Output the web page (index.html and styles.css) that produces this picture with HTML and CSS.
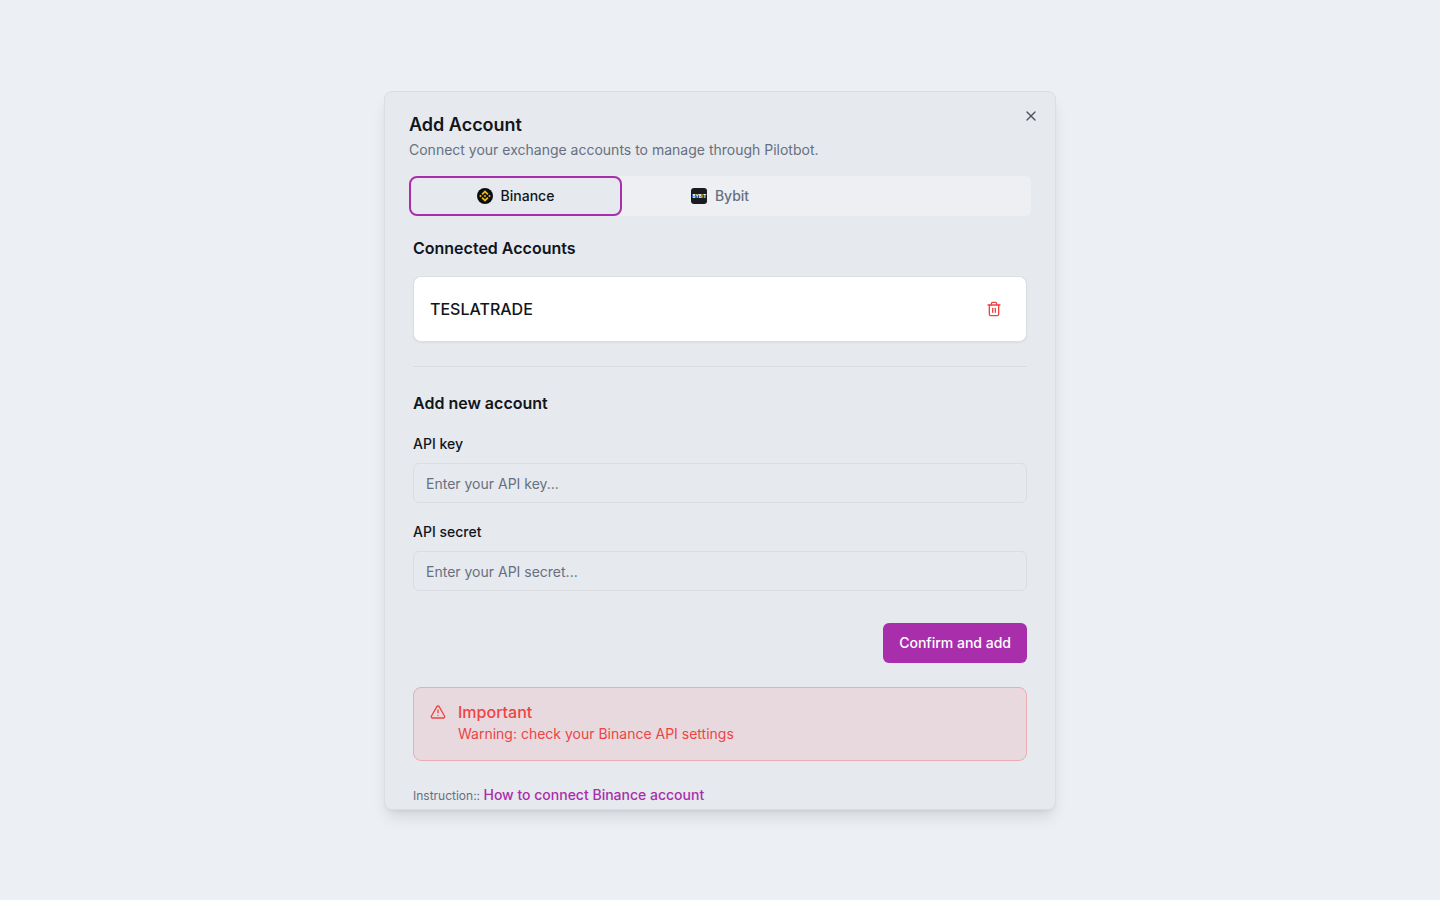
FILE: index.html
```html
<!DOCTYPE html>
<html lang="en">
<head>
    <meta charset="UTF-8">
    <meta name="viewport" content="width=device-width, initial-scale=1.0">
    <title>Add Account</title>
    <link rel="stylesheet" href="styles.css">
</head>
<body>
    <div class="dialog" role="dialog" aria-labelledby="dialogTitle">
        <button type="button" class="close-button" aria-label="Close">
            <svg class="icon" viewBox="0 0 24 24"><path d="M18 6 6 18"/><path d="m6 6 12 12"/></svg>
        </button>

        <div class="dialog-header">
            <h1 id="dialogTitle">Add Account</h1>
            <p>Connect your exchange accounts to manage through Pilotbot.</p>
        </div>

        <div class="tabs" role="tablist">
            <button type="button" class="tab active" role="tab" aria-selected="true">
                <svg class="logo" viewBox="0 0 32 32">
                    <circle cx="16" cy="16" r="16" fill="#0b0e11"/>
                    <g fill="#f0b90b" transform="translate(16 16) scale(1.15) translate(-16 -16)">
                        <path d="M12.1 14.4 16 10.5l3.9 3.9 2.3-2.3L16 5.9l-6.2 6.2z"/>
                        <path d="m5.9 16 2.3-2.3 2.3 2.3-2.3 2.3z"/>
                        <path d="m12.1 17.6 3.9 3.9 3.9-3.9 2.3 2.3-6.2 6.2-6.2-6.2z"/>
                        <path d="m21.5 16 2.3-2.3 2.3 2.3-2.3 2.3z"/>
                        <path d="m13.7 16 2.3-2.3 2.3 2.3-2.3 2.3z"/>
                    </g>
                </svg>
                Binance
            </button>
            <button type="button" class="tab" role="tab" aria-selected="false">
                <svg class="logo" viewBox="0 0 32 32">
                    <rect width="32" height="32" rx="6" fill="#1b1c22"/>
                    <text class="logo-text" x="3" y="19">BYB<tspan fill="#f7a600">I</tspan>T</text>
                </svg>
                Bybit
            </button>
        </div>

        <div class="tab-content">
            <h2>Connected Accounts</h2>
            <div class="account">
                <span>TESLATRADE</span>
                <button type="button" class="delete-button" aria-label="Delete account">
                    <svg class="icon" viewBox="0 0 24 24"><path d="M3 6h18"/><path d="M19 6v14c0 1-1 2-2 2H7c-1 0-2-1-2-2V6"/><path d="M8 6V4c0-1 1-2 2-2h4c1 0 2 1 2 2v2"/><path d="M10 11v6"/><path d="M14 11v6"/></svg>
                </button>
            </div>

            <hr>

            <h2>Add new account</h2>
            <form class="account-form">
                <div class="field">
                    <label for="apiKey">API key</label>
                    <input type="text" id="apiKey" placeholder="Enter your API key...">
                </div>
                <div class="field">
                    <label for="apiSecret">API secret</label>
                    <input type="text" id="apiSecret" placeholder="Enter your API secret...">
                </div>
                <button type="submit" class="submit-button">Confirm and add</button>
            </form>

            <div class="alert" role="alert">
                <svg class="icon" viewBox="0 0 24 24"><path d="m21.73 18-8-14a2 2 0 0 0-3.48 0l-8 14A2 2 0 0 0 4 21h16a2 2 0 0 0 1.73-3Z"/><path d="M12 9v4"/><path d="M12 17h.01"/></svg>
                <div>
                    <h3>Important</h3>
                    <p>Warning: check your Binance API settings</p>
                </div>
            </div>

            <p class="instruction">Instruction:: <a href="#">How to connect Binance account</a></p>
        </div>
    </div>
</body>
</html>
```
FILE: styles.css
```css
* {
    box-sizing: border-box;
}

body {
    margin: 0;
    min-height: 100vh;
    display: flex;
    align-items: center;
    justify-content: center;
    background-color: #ecf0f5;
    color: #11151c;
    font-family: Inter, sans-serif;
    font-size: 14px;
    line-height: 20px;
}

h1, h2, h3, p {
    margin: 0;
}

button {
    padding: 0;
    border: none;
    background: none;
    font: inherit;
    color: inherit;
    cursor: pointer;
}

.icon {
    display: block;
    width: 16px;
    height: 16px;
    fill: none;
    stroke: currentColor;
    stroke-width: 2;
    stroke-linecap: round;
    stroke-linejoin: round;
}

.dialog {
    position: relative;
    display: flex;
    flex-direction: column;
    gap: 16px;
    width: 100%;
    max-width: 672px;
    padding: 24px 24px 3px;
    background-color: #e6e9ee;
    border: 1px solid #dadee3;
    border-radius: 8px;
    box-shadow: 0 10px 15px -3px rgba(0, 0, 0, 0.1), 0 4px 6px -4px rgba(0, 0, 0, 0.1);
}

.close-button {
    position: absolute;
    top: 16px;
    right: 16px;
    opacity: 0.7;
}

.dialog-header {
    display: flex;
    flex-direction: column;
    gap: 6px;
}

.dialog-header h1 {
    font-size: 18px;
    font-weight: 600;
    line-height: 18px;
}

.dialog-header p {
    color: #677080;
}

.tabs {
    display: grid;
    grid-template-columns: 213fr 196fr 213fr;
    height: 40px;
    background-color: #edeff3;
    border-radius: 6px;
}

.tab {
    display: flex;
    align-items: center;
    justify-content: center;
    gap: 8px;
    border: 2px solid transparent;
    border-radius: 8px;
    font-weight: 500;
    color: #677080;
}

.tab.active {
    border-color: #a92eac;
    background-color: #e6e9ee;
    color: #11151c;
}

.logo {
    width: 16px;
    height: 16px;
}

.logo-text {
    font-size: 9px;
    font-weight: 800;
    fill: #fff;
}

.tab-content {
    padding: 4px 4px 0;
}

.tab-content h2 {
    font-size: 16px;
    font-weight: 600;
    line-height: 24px;
}

.account {
    display: flex;
    align-items: center;
    justify-content: space-between;
    margin-top: 16px;
    padding: 16px;
    background-color: #fff;
    border: 1px solid #dadee3;
    border-radius: 8px;
    box-shadow: 0 1px 2px rgba(0, 0, 0, 0.05);
    font-size: 16px;
    font-weight: 500;
    line-height: 24px;
}

.delete-button {
    padding: 8px;
    color: #ee4444;
}

hr {
    height: 1px;
    margin: 24px 0;
    border: none;
    background-color: #dadee3;
}

.account-form {
    display: flex;
    flex-direction: column;
    gap: 16px;
    margin-top: 16px;
}

.field {
    display: flex;
    flex-direction: column;
    gap: 6px;
}

.field label {
    font-weight: 500;
    line-height: 26px;
}

.field input {
    width: 100%;
    height: 40px;
    padding: 10px 12px 8px;
    border: 1px solid #dadee3;
    border-radius: 6px;
    background-color: transparent;
    color: inherit;
    font: inherit;
}

.field input::placeholder {
    color: #677080;
}

.submit-button {
    align-self: flex-end;
    margin-top: 16px;
    padding: 10px 16px;
    border-radius: 6px;
    background-color: #a92eac;
    color: #fff;
    font-weight: 500;
}

.alert {
    display: flex;
    gap: 12px;
    margin-top: 24px;
    padding: 16px;
    border: 1px solid #ebadb1;
    border-radius: 8px;
    background-color: #e7d9de;
    color: #ee4444;
}

.alert h3 {
    margin-bottom: 4px;
    font-size: 16px;
    font-weight: 500;
    line-height: 16px;
}

.instruction {
    margin-top: 24px;
    font-size: 12px;
    color: #677080;
}

.instruction a {
    font-size: 14px;
    font-weight: 500;
    color: #a92eac;
    text-decoration: none;
}
```
